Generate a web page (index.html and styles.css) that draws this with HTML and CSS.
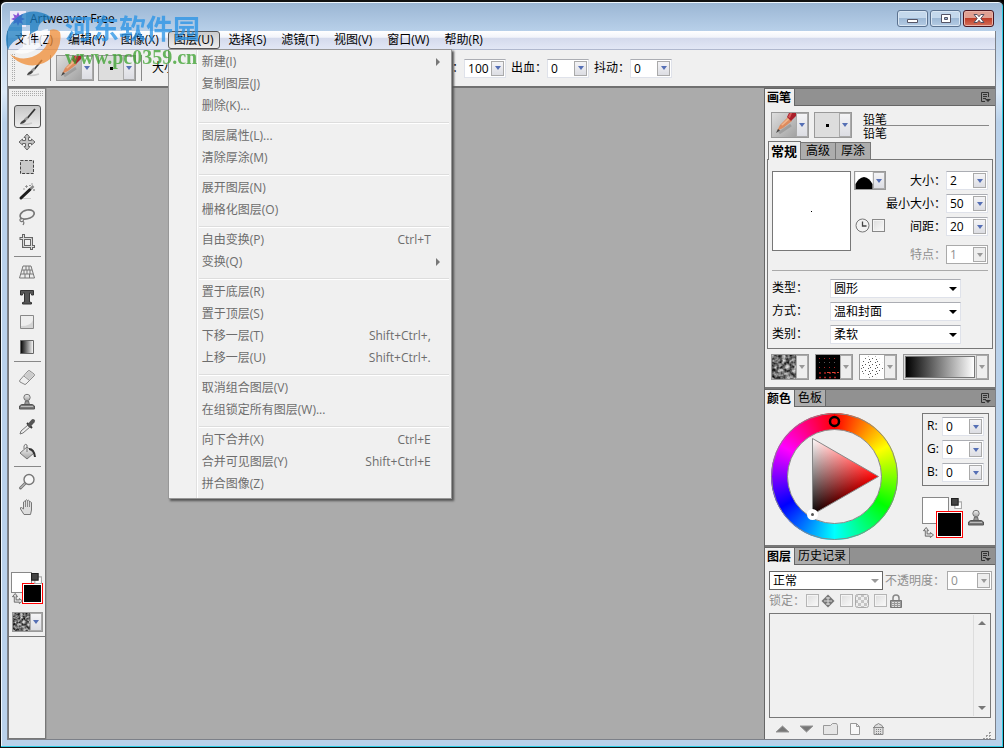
FILE: index.html
```html
<!DOCTYPE html>
<html lang="zh-CN">
<head>
<meta charset="utf-8">
<title>Artweaver Free</title>
<link rel="stylesheet" href="styles.css">
</head>
<body>
<svg class="defs" width="0" height="0" aria-hidden="true">
  <defs>
    <linearGradient id="metal" x1="0" y1="0" x2="0" y2="1"><stop offset="0" stop-color="#f4f4f4"/><stop offset="1" stop-color="#a4a4a4"/></linearGradient>
    <linearGradient id="fade"><stop offset="0" stop-color="#000"/><stop offset="1" stop-color="#fff"/></linearGradient>
    <linearGradient id="paper" x1="0" y1="0" x2="1" y2="1"><stop offset="0" stop-color="#dedede"/><stop offset="1" stop-color="#a2a2a2"/></linearGradient>
    <filter id="noise" x="0" y="0" width="1" height="1" color-interpolation-filters="sRGB">
      <feTurbulence type="fractalNoise" baseFrequency=".28" numOctaves="2" seed="4"/>
      <feColorMatrix values="1.3 0 0 0 -.2  1.3 0 0 0 -.2  1.3 0 0 0 -.2  0 0 0 0 1"/>
    </filter>
    <pattern id="checks" width="6" height="6" patternUnits="userSpaceOnUse"><path d="M0 0h3v3H0zM3 3h3v3H3z" fill="#c4c4c4"/></pattern>
    <pattern id="specks" width="7" height="6" patternUnits="userSpaceOnUse"><path d="M1 1h1v1H1zM5 3h1v1H5zM3 0h1v1H3zM2 4h1v1H2z" fill="#555"/></pattern>
  </defs>
  <symbol id="i-brush" viewBox="0 0 20 20">
    <path d="M3 17c4 1 9 0 12-1" stroke="#ccc" stroke-width="1.5" fill="none"/>
    <path d="M18 2 10.500 11" stroke="#333" stroke-width="1.800"/>
    <path d="M10.500 10.500 7.500 13.500" stroke="#999" stroke-width="2.600"/>
    <path d="M8 12.500Q4 13.500 3 17q4 0 6-3z" fill="#444"/>
  </symbol>
  <symbol id="i-move" viewBox="0 0 20 20">
    <path d="m10 2 3 3.500h-1.500v3h3V7L18 10l-3.500 3v-1.500h-3v3H13L10 18l-3-3.500h1.500v-3h-3V13L2 10l3.500-3v1.500h3v-3H7z" fill="#c4c4c4" stroke="#666"/>
  </symbol>
  <symbol id="i-marquee" viewBox="0 0 20 20"><path d="M3.500 3.500h13v13h-13z" fill="#c9c9c9" stroke="#444" stroke-dasharray="3 1.300"/></symbol>
  <symbol id="i-wand" viewBox="0 0 20 20">
    <path d="M4 16.500h10" stroke="#ccc"/><path d="M4 16 13 7.500" stroke="#1b1b1b" stroke-width="3" stroke-linecap="round"/><path d="m13.500 7 3-3" stroke="#888" stroke-width="2.500"/>
    <path d="M8 4.500h3M9.500 3v3M12 3.500h2M16 8h2M17 7v2M6 7h2M15 1v2" stroke="#888" stroke-width=".8"/>
  </symbol>
  <symbol id="i-lasso" viewBox="0 0 20 20">
    <path d="M5 12C1 9 4 4 10 3c5-.7 8 1.500 7 4.500-1 3-6 5-11 4.500" fill="none" stroke="#777" stroke-width="1.600"/>
    <path d="M6 11.500c-3-1-4 2-2 3 2 .7 3-1 2-3M5.500 14c2 1 1.500 2.500.5 4" fill="none" stroke="#777" stroke-width="1.200"/>
  </symbol>
  <symbol id="i-crop" viewBox="0 0 20 20">
    <path d="M6.500 2v12.500H18M2.500 6.500h12V18" fill="none" stroke="#666" stroke-width="3"/><path d="M6.500 3v11.500H17M3.500 6.500h11V17" fill="none" stroke="#ddd"/>
  </symbol>
  <symbol id="i-grid" viewBox="0 0 20 20"><path d="M6 4h8l3.500 12h-15zM5 8h10M4 12h12M9 4v4M12 4v4M7 8v4M10 8v4M13 8v4M8 12v4M12.500 12v4" fill="#ececec" stroke="#777" stroke-width="1"/></symbol>
  <symbol id="i-type" viewBox="0 0 20 20"><path d="M3.500 3.500h13V8h-2c0-1.500-.5-2-2-2v9l2 .5v1.500h-9v-1.500l2-.5V6c-1.500 0-2 .5-2 2h-2z" fill="#555" stroke="#333"/></symbol>
  <symbol id="i-shape" viewBox="0 0 20 20"><path d="M3.500 3.500h13v13h-13z" fill="#eee" stroke="#888"/><path d="M4 14q10 0 12-6v8H4z" fill="#d4d4d4"/></symbol>
  <symbol id="i-gradient" viewBox="0 0 20 20"><path d="M3.500 3.500h13v13h-13z" fill="url(#fade)" stroke="#666"/></symbol>
  <symbol id="i-eraser" viewBox="0 0 20 20"><path d="m3 13 8-9q1-1 2 0l4 3q1 1 0 2l-8 8q-1 1-2 0l-4-2q-1-1 0-2z" fill="#eee" stroke="#888"/><path d="m7 9 5.500 4.500" stroke="#888"/><path d="m8 8.500 4-4.500 5 4-4.500 5z" fill="#ccc"/></symbol>
  <symbol id="i-stamp" viewBox="0 0 20 20"><path d="M8.500 9h3l1 4h-5z" fill="#999" stroke="#666"/><circle cx="10" cy="5.500" r="3.200" fill="url(#metal)" stroke="#777"/><path d="M4.500 12.500h11l2 1.500v3h-15v-3z" fill="#777" stroke="#555"/><path d="M4 14.500h12" stroke="#bbb"/></symbol>
  <symbol id="i-dropper" viewBox="0 0 20 20"><path d="m3 17 1-3 7-6 2 2-7 6z" fill="#eee" stroke="#777"/><path d="m10 6 5 5" stroke="#333" stroke-width="2"/><path d="m12.500 8 3.500-4" stroke="#555" stroke-width="4" stroke-linecap="round"/></symbol>
  <symbol id="i-bucket" viewBox="0 0 20 20"><path d="m3 11 7-6 7 6-7 6z" fill="url(#metal)" stroke="#777"/><path d="M10 10V3q-2-2-3 1v3" fill="none" stroke="#777"/><path d="M12 7q5 0 6 8" fill="none" stroke="#333" stroke-width="2"/></symbol>
  <symbol id="i-zoom" viewBox="0 0 20 20"><path d="m8.500 11-5 5" stroke="#777" stroke-width="3" stroke-linecap="round"/><path d="m8.500 11-5 5" stroke="#ddd"/><circle cx="12" cy="7.500" r="5" fill="#f7f7f7" stroke="#777" stroke-width="1.400"/></symbol>
  <symbol id="i-hand" viewBox="0 0 20 20"><path d="M7 17.500 3.500 12q-.5-2 1-1.500L6.500 12V5q1-1.500 2 0V3.500q1-1.500 2 0V4q1-1.500 2 0v1.500q1-1.500 2 0V13l-1 4.500z" fill="#ddd" stroke="#777"/><path d="M8.500 5v5M10.500 4v6M12.500 5v5" stroke="#888"/></symbol>
  <symbol id="i-reset" viewBox="0 0 10 10"><path d="M3.500 3.500h6v6h-6z" fill="#fff" stroke="#aaa"/><path d="M.5.500h6v6h-6z" fill="#444" stroke="#222"/></symbol>
  <symbol id="i-swap" viewBox="0 0 12 12"><path d="M3.500.5 6 4H4.500v3.500H8V6l3.500 2.700L8 11.500V10H2.500V4H.500z" fill="#ddd" stroke="#666"/></symbol>
  <symbol id="i-pencil" viewBox="0 0 24 24"><path d="M0 0h24v24H0z" fill="url(#paper)"/><path d="m7 20 12-8" stroke="#777" stroke-width="3" opacity=".4"/><path d="m5 18 3-6 8-8 4 4-9 7z" fill="#dd8b5e"/><path d="m9 12 8-8 1.500 1.500-8 7z" fill="#f1b58c"/><path d="m15 4 2-4h7v3l-5 5z" fill="#a91f2b"/><path d="m16 4 2-4h2l-2 5z" fill="#d65a5a"/><path d="m4 20 2-4 2 1.500z" fill="#444"/></symbol>
  <symbol id="i-menu" viewBox="0 0 11 12"><path d="M8.500 6V1.500h-7v9H5M3 3.500h4M3 5.500h4M3 7.500h3" fill="none" stroke="#333"/><path d="M5 8h6l-3 3z" fill="#333"/></symbol>
  <symbol id="i-noise" viewBox="0 0 24 24"><path d="M0 0h24v24H0z" filter="url(#noise)"/></symbol>
</svg>

<div class="window">
  <header class="titlebar">
    <svg class="app-icon" viewBox="0 0 16 16"><path d="M0 0h16v16H0z" fill="#eee9f7"/><path d="m8 1 1.500 3.500L13 3l-1.500 3.500L15 8l-3.500 1.500L13 13l-3.500-1.500L8 15l-1.500-3.500L3 13l1.500-3.500L1 8l3.500-1.500L3 3l3.500 1.500z" fill="#8a56d8"/></svg>
    <h1 class="title">Artweaver Free</h1>
    <div class="window-buttons">
      <button class="wbtn" aria-label="最小化"><svg viewBox="0 0 14 12"><path d="M1.500 6.500h10v3h-10z" fill="#fff" stroke="#556"/></svg></button>
      <button class="wbtn" aria-label="最大化"><svg viewBox="0 0 14 12"><path d="M2.500 1.500h9v8h-9zM5.500 4.500v2h3v-2z" fill="#fff" fill-rule="evenodd" stroke="#556"/></svg></button>
      <button class="wbtn close" aria-label="关闭"><svg viewBox="0 0 14 12"><path d="M2 1.500h3.200L7 3.700l1.800-2.200H12L8.800 5.500 12 9.500H8.800L7 7.300 5.200 9.500H2l3.200-4z" fill="#fff" stroke="#545060"/></svg></button>
    </div>
  </header>

  <div class="client">
    <nav class="menubar">
      <button class="menu-title">文件(Z)</button>
      <button class="menu-title">编辑(Y)</button>
      <button class="menu-title">图像(X)</button>
      <div class="menu-host">
        <button class="menu-title open" aria-expanded="true">图层(U)</button>
        <div class="menu" role="menu">
          <button class="item sub" role="menuitem">新建(I)</button>
          <button class="item" role="menuitem">复制图层(J)</button>
          <button class="item" role="menuitem">删除(K)...</button>
          <hr>
          <button class="item" role="menuitem">图层属性(L)...</button>
          <button class="item" role="menuitem">清除厚涂(M)</button>
          <hr>
          <button class="item" role="menuitem">展开图层(N)</button>
          <button class="item" role="menuitem">栅格化图层(O)</button>
          <hr>
          <button class="item" role="menuitem">自由变换(P)<span>Ctrl+T</span></button>
          <button class="item sub" role="menuitem">变换(Q)</button>
          <hr>
          <button class="item" role="menuitem">置于底层(R)</button>
          <button class="item" role="menuitem">置于顶层(S)</button>
          <button class="item" role="menuitem">下移一层(T)<span>Shift+Ctrl+,</span></button>
          <button class="item" role="menuitem">上移一层(U)<span>Shift+Ctrl+.</span></button>
          <hr>
          <button class="item" role="menuitem">取消组合图层(V)</button>
          <button class="item" role="menuitem">在组锁定所有图层(W)...</button>
          <hr>
          <button class="item" role="menuitem">向下合并(X)<span>Ctrl+E</span></button>
          <button class="item" role="menuitem">合并可见图层(Y)<span>Shift+Ctrl+E</span></button>
          <button class="item" role="menuitem">拼合图像(Z)</button>
        </div>
      </div>
      <button class="menu-title">选择(S)</button>
      <button class="menu-title">滤镜(T)</button>
      <button class="menu-title">视图(V)</button>
      <button class="menu-title">窗口(W)</button>
      <button class="menu-title">帮助(R)</button>
    </nav>

    <div class="options">
      <i class="grip"></i>
      <svg class="ico"><use href="#i-brush"/></svg>
      <i class="vsep"></i>
      <button class="picker" aria-label="画笔"><svg><use href="#i-pencil"/></svg><b class="arrow"></b></button>
      <button class="picker" aria-label="变体"><span class="dot"></span><b class="arrow"></b></button>
      <i class="vsep"></i>
      <span class="size-label">大小</span>
      <label for="o1">：</label>
      <div class="combo"><input id="o1" value="100"><button class="arrow" aria-label="调整"></button></div>
      <label for="o2">出血：</label>
      <div class="combo"><input id="o2" value="0"><button class="arrow" aria-label="调整"></button></div>
      <label for="o3">抖动：</label>
      <div class="combo"><input id="o3" value="0"><button class="arrow" aria-label="调整"></button></div>
    </div>

    <main class="work">
      <aside class="toolbox">
        <i class="grip wide"></i>
        <button class="tool on" aria-label="画笔"><svg class="ico"><use href="#i-brush"/></svg></button>
        <button class="tool" aria-label="移动"><svg class="ico"><use href="#i-move"/></svg></button>
        <button class="tool" aria-label="选框"><svg class="ico"><use href="#i-marquee"/></svg></button>
        <button class="tool" aria-label="魔棒"><svg class="ico"><use href="#i-wand"/></svg></button>
        <button class="tool" aria-label="套索"><svg class="ico"><use href="#i-lasso"/></svg></button>
        <button class="tool" aria-label="裁剪"><svg class="ico"><use href="#i-crop"/></svg></button>
        <hr>
        <button class="tool" aria-label="透视"><svg class="ico"><use href="#i-grid"/></svg></button>
        <button class="tool" aria-label="文字"><svg class="ico"><use href="#i-type"/></svg></button>
        <button class="tool" aria-label="形状"><svg class="ico"><use href="#i-shape"/></svg></button>
        <button class="tool" aria-label="渐变"><svg class="ico"><use href="#i-gradient"/></svg></button>
        <hr>
        <button class="tool" aria-label="橡皮"><svg class="ico"><use href="#i-eraser"/></svg></button>
        <button class="tool" aria-label="图章"><svg class="ico"><use href="#i-stamp"/></svg></button>
        <button class="tool" aria-label="吸管"><svg class="ico"><use href="#i-dropper"/></svg></button>
        <button class="tool" aria-label="油漆桶"><svg class="ico"><use href="#i-bucket"/></svg></button>
        <hr>
        <button class="tool" aria-label="缩放"><svg class="ico"><use href="#i-zoom"/></svg></button>
        <button class="tool" aria-label="抓手"><svg class="ico"><use href="#i-hand"/></svg></button>
        <div class="swatches small">
          <button class="back" aria-label="背景色"></button><button class="fore" aria-label="前景色"></button>
          <svg class="reset"><use href="#i-reset"/></svg><svg class="swap"><use href="#i-swap"/></svg>
        </div>
        <button class="picker mini" aria-label="纹理"><svg><use href="#i-noise"/></svg><b class="arrow"></b></button>
        <div class="toolbox-end"></div>
      </aside>

      <section class="canvas"></section>

      <aside class="docks">
        <section class="dock">
          <div class="dock-head"><button class="dtab on">画笔</button><button class="dmenu" aria-label="菜单"><svg><use href="#i-menu"/></svg></button></div>
          <div class="brush-body">
            <div class="brush-row">
              <button class="picker" aria-label="画笔"><svg><use href="#i-pencil"/></svg><b class="arrow"></b></button>
              <button class="picker" aria-label="变体"><span class="dot"></span><b class="arrow"></b></button>
              <div class="brush-name"><span>铅笔</span><span>铅笔</span></div>
            </div>
            <div class="tabs"><button class="tab on">常规</button><button class="tab">高级</button><button class="tab">厚涂</button></div>
            <div class="tab-page">
              <div class="general">
                <div class="preview"></div>
                <div class="shape-col">
                  <button class="picker shape" aria-label="笔尖"><svg viewBox="0 0 17 17"><path d="M0 0h17v17H0z" fill="#fff"/><path d="M0 17v-5q3-6 8.500-7Q14 6 17 12v5z"/></svg><b class="arrow"></b></button>
                  <div class="timer">
                    <svg viewBox="0 0 15 15"><circle cx="7.500" cy="7.500" r="6.500" fill="#f2f2f2" stroke="#777"/><path d="M7.500 3.500v4.500h4" fill="none" stroke="#444" stroke-width="1.300"/></svg>
                    <input type="checkbox" class="check" aria-label="定时">
                  </div>
                </div>
                <div class="fields">
                  <label for="b1">大小：</label><div class="combo"><input id="b1" value="2"><button class="arrow" aria-label="调整"></button></div>
                  <label for="b2">最小大小：</label><div class="combo"><input id="b2" value="50"><button class="arrow" aria-label="调整"></button></div>
                  <label for="b3">间距：</label><div class="combo"><input id="b3" value="20"><button class="arrow" aria-label="调整"></button></div>
                  <label for="b4" class="off last">特点：</label><div class="combo off last"><input id="b4" value="1" disabled><button class="arrow" aria-label="调整" disabled></button></div>
                </div>
              </div>
              <hr>
              <div class="selects">
                <label for="s1">类型：</label><div class="select"><select id="s1"><option>圆形</option></select></div>
                <label for="s2">方式：</label><div class="select"><select id="s2"><option>温和封面</option></select></div>
                <label for="s3">类别：</label><div class="select"><select id="s3"><option>柔软</option></select></div>
              </div>
            </div>
            <div class="textures">
              <button class="picker flat" aria-label="纹理"><svg><use href="#i-noise"/></svg><b class="arrow"></b></button>
              <button class="picker flat" aria-label="图案"><svg viewBox="0 0 24 24"><path d="M0 0h24v24H0z"/><path d="M3 3.500h20M3 12.500h20" stroke="#a22" stroke-dasharray="1 4"/><path d="M3 7.500h20" stroke="#555" stroke-dasharray="1 4"/><path d="M3 18h20M3 22.500h20" stroke="#a22" stroke-width="1.500" stroke-dasharray="2 3"/><path d="M11 17.500h12" stroke="#d43" stroke-dasharray="3 2"/></svg><b class="arrow"></b></button>
              <button class="picker flat" aria-label="喷管"><svg viewBox="0 0 24 24"><path d="M0 0h24v24H0z" fill="#fff"/><circle cx="12" cy="12" r="11" fill="url(#specks)"/></svg><b class="arrow"></b></button>
              <button class="picker flat long" aria-label="渐变"><span class="ramp"></span><b class="arrow"></b></button>
            </div>
          </div>
        </section>

        <section class="dock">
          <div class="dock-head"><button class="dtab on">颜色</button><button class="dtab">色板</button><button class="dmenu" aria-label="菜单"><svg><use href="#i-menu"/></svg></button></div>
          <div class="color-body">
            <div class="wheel">
              <svg viewBox="0 0 127 127">
                <defs>
                  <linearGradient id="light" gradientUnits="userSpaceOnUse" x1="74" y1="83" x2="41" y2="25"><stop offset="0" stop-color="#000"/><stop offset="1" stop-color="#fff"/></linearGradient>
                  <linearGradient id="red" gradientUnits="userSpaceOnUse" x1="41" y1="0" x2="107" y2="0"><stop offset="0" stop-color="#000"/><stop offset="1" stop-color="#f00"/></linearGradient>
                </defs>
                <circle cx="63.500" cy="63.500" r="63" fill="none" stroke="#888"/>
                <circle cx="63.500" cy="63.500" r="47" fill="#efefef" stroke="#888"/>
                <path d="M41.500 25.500v76l66-38z" fill="url(#light)"/>
                <path class="add" d="M41.500 25.500v76l66-38z" fill="url(#red)"/>
                <path d="M41.500 25.500v76l66-38z" fill="none" stroke="#888"/>
                <circle cx="63.500" cy="8.500" r="4.500" fill="none" stroke="#000" stroke-width="2.500"/>
                <circle cx="41.500" cy="101.500" r="3.500" fill="#555" stroke="#fff" stroke-width="4"/>
              </svg>
            </div>
            <div class="color-side">
              <div class="rgb">
                <label for="cr">R:</label><div class="combo"><input id="cr" value="0"><button class="arrow" aria-label="调整"></button></div>
                <label for="cg">G:</label><div class="combo"><input id="cg" value="0"><button class="arrow" aria-label="调整"></button></div>
                <label for="cb">B:</label><div class="combo"><input id="cb" value="0"><button class="arrow" aria-label="调整"></button></div>
              </div>
              <div class="swatch-row">
                <div class="swatches">
                  <button class="back" aria-label="背景色"></button><button class="fore" aria-label="前景色"></button>
                  <svg class="reset"><use href="#i-reset"/></svg><svg class="swap"><use href="#i-swap"/></svg>
                </div>
                <svg class="ico"><use href="#i-stamp"/></svg>
              </div>
            </div>
          </div>
        </section>

        <section class="dock grow">
          <div class="dock-head"><button class="dtab on">图层</button><button class="dtab">历史记录</button><button class="dmenu" aria-label="菜单"><svg><use href="#i-menu"/></svg></button></div>
          <div class="layer-body">
            <div class="blend">
              <div class="select off"><select aria-label="混合模式"><option>正常</option></select></div>
              <label for="op" class="off">不透明度：</label>
              <div class="combo off"><input id="op" value="0" disabled><button class="arrow" aria-label="调整" disabled></button></div>
            </div>
            <div class="locks">
              <span class="off">锁定：</span>
              <label><input type="checkbox" class="check" disabled aria-label="锁定位置"><svg viewBox="0 0 14 14"><path d="m7 .5 6.500 6.500L7 13.500.5 7z" fill="#777"/><path d="M7 3v8M3 7h8M5 4h4M5 10h4" stroke="#ddd"/></svg></label>
              <label><input type="checkbox" class="check" disabled aria-label="锁定透明"><svg viewBox="0 0 14 14"><rect x=".5" y=".5" width="13" height="13" rx="2" fill="#eee" stroke="#aaa"/><path d="M1 1h12v12H1z" fill="url(#checks)"/></svg></label>
              <label><input type="checkbox" class="check" disabled aria-label="锁定全部"><svg viewBox="0 0 14 14"><path d="M4 6V4q0-3 3-3t3 3v2" fill="none" stroke="#888" stroke-width="1.500"/><path d="M1.500 6.500h11v7h-11z" fill="#999" stroke="#777"/><path d="M3 8.500h8M3 10.500h8M3 12.500h8" stroke="#ddd" stroke-dasharray="2 1"/></svg></label>
            </div>
            <div class="layers"><div class="scroll"><button class="up" aria-label="向上"></button><button class="down" aria-label="向下"></button></div></div>
            <div class="layer-actions">
              <button aria-label="上移"><svg viewBox="0 0 15 14"><path d="m1 10 6.500-6 6.500 6z" fill="#777" stroke="#999"/></svg></button>
              <button aria-label="下移"><svg viewBox="0 0 15 14"><path d="m1 4 6.500 6L14 4z" fill="#777" stroke="#999"/></svg></button>
              <button aria-label="新建组"><svg viewBox="0 0 15 14"><path d="M.5 3.500h7l2-2h4l1 2v9H.5z" fill="#e6e6e6" stroke="#999"/></svg></button>
              <button aria-label="新建图层"><svg viewBox="0 0 15 14"><path d="M3.500 1.500h6l3 3v8h-9zM9.500 1.500v3h3" fill="#f8f8f8" stroke="#999"/></svg></button>
              <button aria-label="删除"><svg viewBox="0 0 15 14"><path d="M2 5.500h11M3 5.500q1-3 3-3l1.500-1L9 2.500q2 0 3 3v7H3z" fill="#ddd" stroke="#888"/><path d="M5 7.500h6M5 9.500h6M5 11.500h6" stroke="#888" stroke-dasharray="1 1"/></svg></button>
              <i class="size-grip"></i>
            </div>
          </div>
        </section>
      </aside>
    </main>
  </div>

  <div class="watermark">
    <svg viewBox="0 0 60 60">
      <path d="M4 40A28 28 0 0 1 50 10C42 8 34 12 34 20l-8 4v-9h-8v12q-11 4-14 13z" fill="#1a7cc0"/>
      <path d="M6 44A28 28 0 0 0 56 22q-4-4-10-2 0 20-18 27-12 4-22-3z" fill="#f08c35"/>
      <path d="M10 42q8 4 19-1 14-7 15-22-8 0-9 6v8h-8v-9l-8 3v10z" fill="#fff"/>
    </svg>
    <div class="wm-text"><span class="wm-name">河东软件园</span><span class="wm-url">www.pc0359.cn</span></div>
  </div>
</div>
</body>
</html>
```

FILE: styles.css
```css
* { box-sizing: border-box; }
body { margin: 0; background: #000; color: #000; font: 12px/18px "Open Sans", "Noto Sans CJK SC", sans-serif; }
button, input, select { font: inherit; color: inherit; margin: 0; padding: 0; border: 0; background: none; border-radius: 0; }
button { white-space: nowrap; }
svg { display: block; flex: none; }
hr { margin: 0; border: 0; }
.defs { position: absolute; }

/* window frame */
.window { position: relative; display: flex; flex-direction: column; height: 100vh; padding: 0 7px 7px 6px; border: 1px solid #111; border-top-width: 2px; border-radius: 6px 6px 0 0; background: linear-gradient(#9ab5d3, #b9d1ea 30px, #dbe9f7 90px, #b9d1ea 120px); box-shadow: inset -1px -1px #2ccbe4, inset 1px 1px #eef6fd; }
.titlebar { display: flex; align-items: center; gap: 4px; height: 29px; padding: 4px 0 0 3px; }
.app-icon { width: 16px; height: 16px; }
.title { flex: 1; margin: 0; font-size: 12px; font-weight: 400; }
.window-buttons { display: flex; gap: 2px; padding-right: 2px; }
.wbtn { display: grid; place-items: center; width: 31px; height: 17px; border: 1px solid #5b7290; border-radius: 3px; background: linear-gradient(#c4d8ec 45%, #9db8d5 50%, #b5cce4); box-shadow: inset 0 0 0 1px #d9e6f3; }
.wbtn svg { width: 14px; height: 12px; }
.wbtn.close { border-color: #4a1620; background: linear-gradient(#e0a092 45%, #bf3d28 50%, #d4705a); box-shadow: inset 0 0 0 1px #e9b3a8; }
.client { flex: 1; display: flex; flex-direction: column; min-height: 0; border: 1px solid #7c8088; border-top: 0; background: #f0f0f0; }

/* menus */
.menubar { display: flex; gap: 3px; height: 19px; padding-left: 1px; border-bottom: 1px solid #b0b8ce; background: linear-gradient(#fff, #f2f4fa 35%, #d4daec 40%, #e2e7f5); }
.menu-title { height: 18px; padding: 0 5px; border: 1px solid transparent; border-radius: 3px; line-height: 16px; }
.menu-title.open { border-color: #555; background: linear-gradient(#ccc, #eee); }
.menu-host { position: relative; }
.menu { position: absolute; z-index: 5; top: 18px; left: 0; width: 284px; padding: 1px 2px 3px; border: 1px solid #979797; background: linear-gradient(90deg, #f1f1f1 27px, #e0e0e0 27px, #e0e0e0 28px, #fff 28px, #fff 29px, #f0f0f0 29px); box-shadow: 2px 2px 2px #555; }
.item { display: flex; justify-content: space-between; align-items: center; width: 100%; height: 22px; padding: 0 18px 0 31px; color: #6d6d6d; text-align: left; }
.item.sub { padding-right: 9px; }
.item.sub::after { content: ""; border: 4px solid transparent; border-left-color: #777; border-right: 0; }
.menu hr { height: 8px; margin-left: 28px; background: linear-gradient(transparent 5px, #ddd 5px, #ddd 6px, #fff 6px, #fff 7px, transparent 7px); }

/* options bar */
.options { display: flex; align-items: center; height: 38px; padding: 0 4px 0 3px; border-bottom: 2px solid #707070; }
.grip { width: 4px; height: 28px; margin-right: 9px; background: conic-gradient(#aaa 25%, transparent 0) 0 0 / 2px 2px; }
.grip.wide { width: 32px; height: 6px; margin: 2px 0 7px; }
.ico { width: 20px; height: 20px; }
.options .ico { margin-right: 5px; }
.vsep { width: 1px; height: 26px; margin: 0 5px 0 1px; background: #888; }
.picker { display: flex; width: 38px; height: 26px; border: 1px solid #999; background: #ddd; }
.options .picker { margin-right: 4px; }
.picker > svg, .picker > span { flex: 1; min-width: 0; width: 24px; height: 24px; }
.arrow { display: grid; place-items: center; flex: none; width: 12px; border: 1px solid #aaa; background: linear-gradient(#f4f4f6, #dcdde3); }
.arrow::after { content: ""; border: 3px solid transparent; border-top: 4px solid #556fb5; border-bottom: 0; }
.dot { display: grid; place-items: center; }
.dot::after { content: ""; width: 3px; height: 3px; background: #000; }
.size-label { width: 300px; margin-left: 5px; }
.combo { display: flex; width: 42px; height: 19px; padding: 1px; border: 1px solid #dfe2ea; border-top-color: #abadb3; background: #fff; }
.combo input { flex: 1; min-width: 0; width: 20px; padding-left: 2px; line-height: 15px; }
.combo .arrow { width: 13px; }
.options .combo { margin-right: 5px; }
.off { color: #8f8f8f; }
.off .arrow, .flat .arrow { background: #eee; }
.off .arrow::after, .flat .arrow::after { border-top-color: #999; }
.combo.off { border-color: #aaa; }

/* work area */
.work { flex: 1; display: flex; min-height: 0; }
.canvas { flex: 1; background: #ababab; border-left: 1px solid #999; }
.toolbox { display: flex; flex-direction: column; align-items: center; width: 38px; border: 1px solid #777; border-top-color: #888; }
.tool { display: grid; place-items: center; width: 27px; height: 25px; }
.tool.on { height: 23px; margin: 1px 0; border: 1px solid #555; border-radius: 3px; background: linear-gradient(#c6c6c6, #eee); }
.toolbox hr { width: 27px; height: 5px; background: linear-gradient(transparent 2px, #888 2px, #888 3px, transparent 3px); }
.swatches { position: relative; width: 41px; height: 41px; }
.back, .fore { position: absolute; width: 27px; height: 27px; border: 1px solid #888; background: #fff; }
.back { top: 0; left: 0; }
.fore { right: 0; bottom: 0; border-color: #f00; background: #000; box-shadow: inset 0 0 0 1px #fff; }
.reset, .swap { position: absolute; width: 11px; height: 11px; }
.reset { top: 1px; right: 1px; }
.swap { left: 1px; bottom: 0; }
.small { width: 32px; height: 32px; margin: 53px 0 8px; }
.small .back, .small .fore { width: 21px; height: 21px; }
.mini { width: 31px; height: 20px; }
.mini > svg { height: 18px; }
.toolbox-end { width: 100%; flex: 1; margin-top: 4px; border-top: 1px solid #777; }

/* docked panels */
.docks { display: flex; flex-direction: column; width: 231px; gap: 2px; background: #777; border-left: 1px solid #666; }
.dock { background: #f0f0f0; border-top: 1px solid #666; }
.grow { flex: 1; display: flex; flex-direction: column; min-height: 0; }
.dock-head { display: flex; height: 17px; background: #919191; border-bottom: 1px solid #666; }
.dtab { height: 16px; padding: 0 3px; border-right: 1px solid #666; background: #adadad; line-height: 16px; }
.dtab.on { height: 17px; padding: 0 3px 0 2px; background: #f0f0f0; font-weight: 600; }
.dmenu { margin-left: auto; padding: 2px 4px; }
.dmenu svg { width: 11px; height: 12px; }
.brush-body { padding: 6px 2px 7px 2px; }
.brush-row { display: flex; gap: 5px; padding: 0 4px; }
.brush-name { flex: 1; display: grid; grid-template-rows: 14px 12px; margin-left: 6px; line-height: 16px; }
.brush-name span:first-child { border-bottom: 1px solid #888; }
.tabs { display: flex; align-items: flex-end; margin: 3px 0 0 1px; }
.tab { height: 17px; padding: 0 5px; border: 1px solid #777; border-width: 1px 1px 0 0; background: #adadad; line-height: 16px; }
.tab.on { height: 19px; margin-bottom: -1px; padding: 0 3px 0 2px; border-left-width: 1px; background: #f0f0f0; font-size: 13px; font-weight: 700; z-index: 1; }
.tab-page { padding: 11px 4px 4px; border: 1px solid #777; }
.general { display: flex; }
.preview { display: grid; place-items: center; width: 80px; height: 80px; border: 1px solid #777; background: #fff; }
.preview::after { content: ""; width: 1px; height: 1px; background: #000; }
.shape-col { display: flex; flex-direction: column; justify-content: space-between; height: 62px; margin-left: 3px; }
.shape { width: 32px; height: 19px; }
.shape > svg { width: 18px; height: 17px; }
.timer { display: flex; align-items: center; gap: 2px; padding-left: 1px; }
.timer svg { width: 15px; height: 15px; }
.check { appearance: none; width: 13px; height: 13px; border: 1px solid #888; background: linear-gradient(135deg, #ddd, #fafafa); box-shadow: inset 0 0 0 1px #f4f4f4; }
.check:disabled { border-color: #b5b5b5; }
.fields { flex: 1; display: grid; grid-template-columns: 1fr 42px; row-gap: 4px; text-align: right; white-space: nowrap; }
.fields label { line-height: 19px; }
.fields .last { margin-top: 5px; }
.tab-page hr { height: 1px; margin: 6px 0 8px; background: #aaa; }
.selects { display: grid; grid-template-columns: 58px 131px; row-gap: 4px; }
.select { position: relative; display: flex; height: 19px; border: 1px solid #dfe2ea; border-top-color: #abadb3; background: #fff; }
.select select { flex: 1; appearance: none; padding-left: 3px; line-height: 17px; }
.select::after { content: ""; position: absolute; right: 3px; top: 7px; border: 4px solid transparent; border-top-color: #000; border-bottom: 0; pointer-events: none; }
.select.off::after { border-top-color: #999; }
.select.off { flex: 1; border-color: #666; color: #000; }
.textures { display: flex; gap: 6px; padding: 5px 4px 0; }
.textures .long { flex: 1; }
.picker .ramp { margin: 1px; height: auto; border: 1px solid #777; background: linear-gradient(90deg, #000, #fff); }
.color-body { display: flex; justify-content: space-between; padding: 6px 6px 5px; }
.wheel { width: 127px; height: 127px; border-radius: 50%; background: conic-gradient(#f00, #ff0, #0f0, #0ff, #00f, #f0f, #f00); }
.wheel svg { width: 127px; height: 127px; isolation: isolate; }
.add { mix-blend-mode: plus-lighter; }
.rgb { display: grid; grid-template-columns: 15px 42px; gap: 4px 0; width: 67px; padding: 3px 4px; border: 1px solid #777; }
.swatch-row { display: flex; align-items: center; justify-content: space-between; margin-top: 11px; padding-right: 3px; }
.layer-body { flex: 1; display: flex; flex-direction: column; min-height: 0; padding: 6px 3px 0 4px; }
.blend { display: flex; align-items: center; gap: 2px; }
.blend .combo { width: 45px; }
.locks { display: flex; align-items: center; gap: 5px; height: 22px; }
.locks span { width: 32px; white-space: nowrap; }
.locks label { display: flex; gap: 2px; }
.locks svg { width: 14px; height: 14px; }
.layers { flex: 1; display: flex; justify-content: flex-end; padding: 1px; border: 1px solid #777; margin: 1px 1px 0 0; }
.scroll { display: flex; flex-direction: column; justify-content: space-between; width: 16px; border-left: 1px solid #ddd; }
.scroll button { display: grid; place-items: center; height: 16px; }
.up::after { content: ""; border: 4px solid transparent; border-bottom-color: #777; border-top: 0; }
.down::after { content: ""; border: 4px solid transparent; border-top-color: #777; border-bottom: 0; }
.layer-actions { display: flex; align-items: center; gap: 9px; height: 21px; padding-left: 6px; }
.layer-actions svg { width: 15px; height: 14px; }
.size-grip { align-self: flex-end; width: 10px; height: 10px; margin-left: auto; background: conic-gradient(#999 25%, transparent 0) 0 0 / 3px 3px; clip-path: polygon(100% 0, 100% 100%, 0 100%); }

/* site mark laid over the window */
.watermark { position: absolute; z-index: 9; top: 8px; left: 3px; display: flex; gap: 1px; opacity: .75; pointer-events: none; }
.watermark svg { width: 60px; height: 60px; }
.wm-text { display: flex; flex-direction: column; white-space: nowrap; }
.wm-name { color: #2592e6; font: 700 27px/36px "Noto Sans CJK SC", sans-serif; }
.wm-url { color: #39a02c; font: 700 20px/22px "Liberation Serif", serif; }
```
